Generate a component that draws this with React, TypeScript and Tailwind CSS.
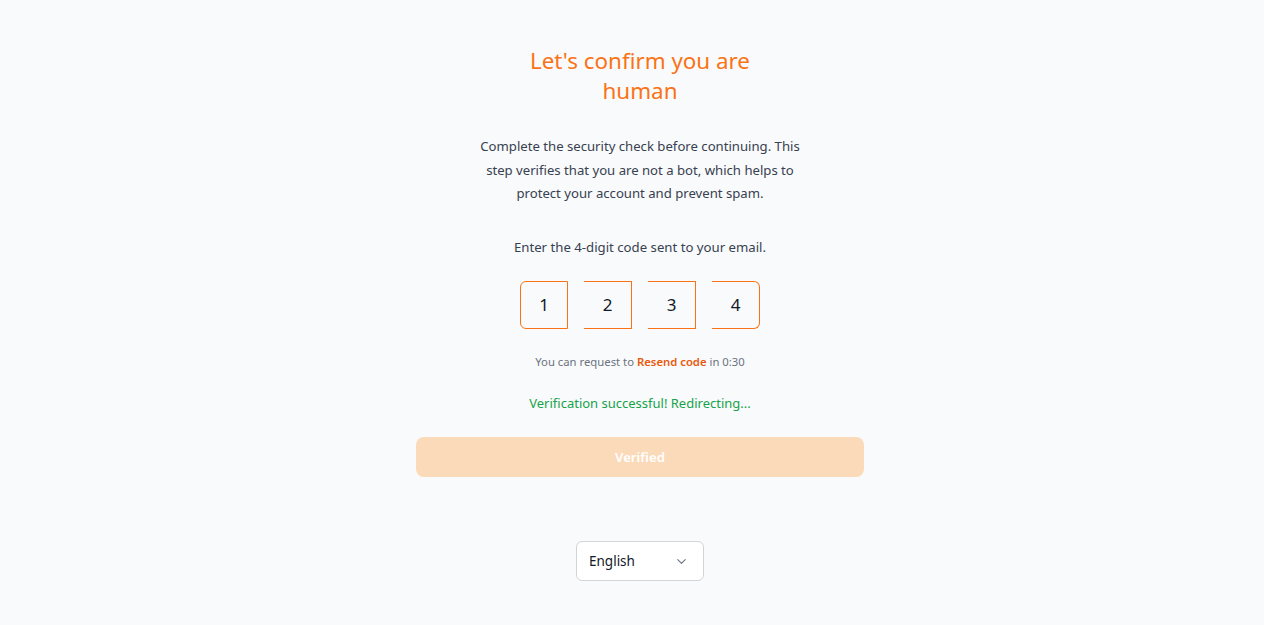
import React from "react";
import { ChevronDown } from "lucide-react";

export default function App() {
  const digits = ["1", "2", "3", "4"];
  return (
    <div
      className="min-h-screen bg-[#f9fafb] flex flex-col items-center pt-[46px] pl-[16px]"
      style={{ fontFamily: '"Segoe UI", "Noto Sans", "Open Sans", sans-serif' }}
    >
      <h1 className="text-[22.4px] leading-[30px] text-[#f97316] text-center font-normal">
        Let's confirm you are
        <br />
        human
      </h1>
      <p className="mt-[29px] text-[13.15px] leading-[23.5px] text-[#374151] text-center whitespace-nowrap">
        Complete the security check before continuing. This
        <br />
        step verifies that you are not a bot, which helps to
        <br />
        protect your account and prevent spam.
      </p>
      <p className="mt-[30px] text-[13.2px] leading-[23.5px] text-[#374151] text-center">
        Enter the 4-digit code sent to your email.
      </p>
      <div className="mt-[22px] flex gap-4">
        {digits.map((d, i) => (
          <div
            key={i}
            className={
              "w-12 h-12 flex items-center justify-center text-[17px] text-[#111827] border-y border-r border-[#f97316] " +
              (i === 0 ? "border-l rounded-l-md " : "") +
              (i === 3 ? "rounded-r-md" : "")
            }
          >
            {d}
          </div>
        ))}
      </div>
      <p className="mt-[25px] text-[11.3px] leading-[16px] text-[#6b7280] text-center">
        You can request to{" "}
        <span className="font-semibold text-[#ea580c]">Resend code</span> in 0:30
      </p>
      <p className="mt-[23px] text-[13px] leading-[20px] text-[#16a34a] text-center">
        Verification successful! Redirecting...
      </p>
      <button className="mt-[24px] w-[448px] h-[40px] rounded-lg bg-[#fbdab9] text-white text-[13.2px] font-semibold pt-[1px]">
        Verified
      </button>
      <div className="mt-[64px] w-[128px] h-[40px] rounded-md border border-[#d1d5db] bg-white flex items-center justify-between pl-[12px] pr-[14px]">
        <span className="text-[13.5px] text-[#111827]">English</span>
        <ChevronDown size={15} className="text-[#6b7280]" strokeWidth={1.75} />
      </div>
    </div>
  );
}
